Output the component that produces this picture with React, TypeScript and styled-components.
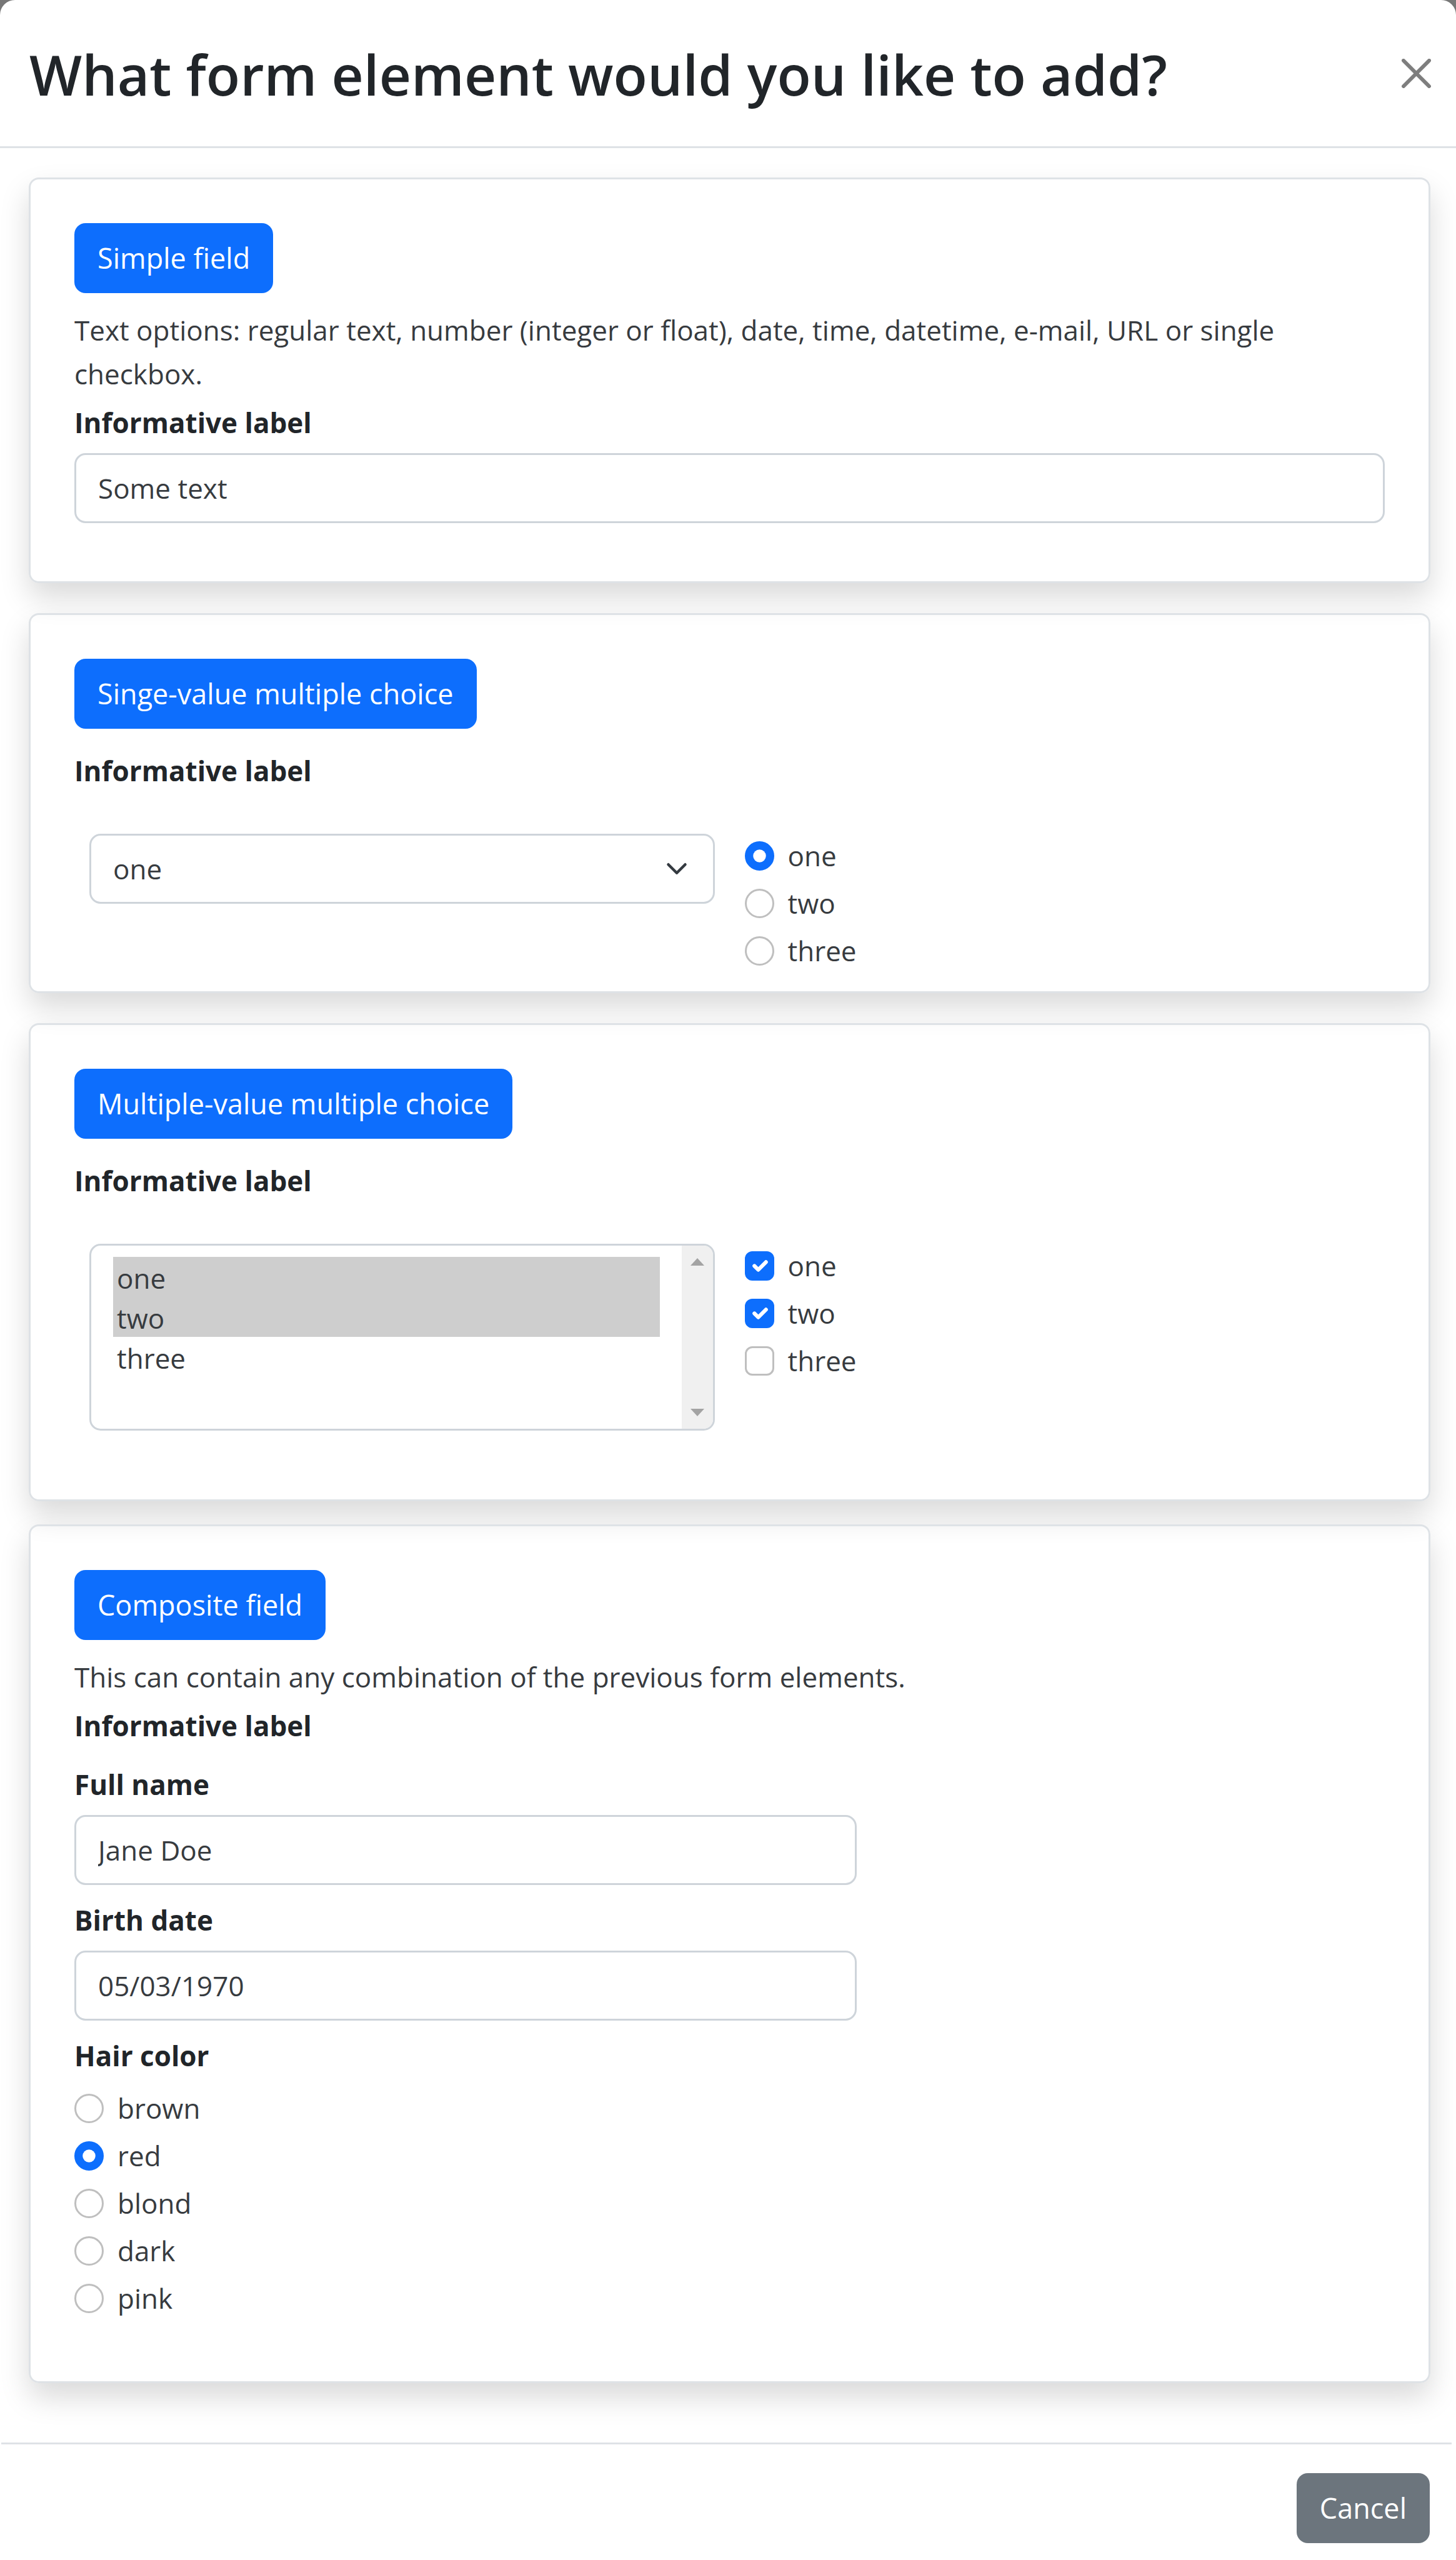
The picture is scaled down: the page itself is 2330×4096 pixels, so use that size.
import React from "react";
import styled, { createGlobalStyle, css } from "styled-components";

const GlobalStyle = createGlobalStyle`
  *, *::before, *::after { box-sizing: border-box; }
  body {
    margin: 0;
    background: #777;
    color: #373b3f;
    font-family: "Open Sans", "Noto Sans", sans-serif;
    font-size: 44px;
    line-height: 70px;
  }
  button, input, select { font: inherit; color: inherit; margin: 0; }
`;

const Modal = styled.main`
  min-height: 100vh;
  background: #fff;
  border-radius: 24px 24px 0 0;
`;

const Header = styled.header`
  display: flex;
  align-items: center;
  justify-content: space-between;
  padding: 47px 40px 47px 47px;
  border-bottom: 3px solid #dee2e6;
`;

const Title = styled.h1`
  margin: 0;
  padding-top: 4px;
  color: #212529;
  font-size: 89px;
  font-weight: 600;
  line-height: 136px;
`;

const CloseButton = styled.button`
  display: flex;
  padding: 0;
  border: 0;
  background: none;
  color: #000;
  opacity: 0.5;
`;

const Body = styled.div`
  display: flex;
  flex-direction: column;
  gap: 48px;
  padding: 47px 41px 95px 46px;
`;

const Card = styled.section<{ $bottom: number }>`
  padding: 70px 70px ${(p) => p.$bottom}px;
  border: 3px solid #dee2e6;
  border-radius: 16px;
  box-shadow: 0 23px 47px rgba(0, 0, 0, 0.15);
`;

const CardPair = styled.div`
  display: flex;
  flex-direction: column;
  gap: 37px;
`;

const Button = styled.button<{ $tone?: "secondary" }>`
  display: block;
  height: 112px;
  padding: 0 37px;
  border: 0;
  border-radius: 18px;
  background: ${(p) => (p.$tone === "secondary" ? "#6c757d" : "#0d6efd")};
  color: #fff;
  font-size: 45px;
`;

const Description = styled.p`
  margin: 24px 0 8px;
`;

const labelText = css`
  display: block;
  color: #212529;
  font-weight: 700;
`;

const Label = styled.label`
  ${labelText}
  margin-bottom: 14px;
`;

const GroupTitle = styled.div<{ $top: number; $bottom: number }>`
  ${labelText}
  margin: ${(p) => p.$top}px 0 ${(p) => p.$bottom}px;
`;

const boxed = css`
  display: block;
  width: 100%;
  border: 3px solid #ced4da;
  border-radius: 18px;
  background-color: #fff;
`;

const TextInput = styled.input`
  ${boxed}
  height: 112px;
  padding: 0 35px;
`;

const chevron = `url("data:image/svg+xml,%3csvg xmlns='http://www.w3.org/2000/svg' viewBox='0 0 16 16'%3e%3cpath fill='none' stroke='%23343a40' stroke-linecap='round' stroke-linejoin='round' stroke-width='2' d='m2 5 6 6 6-6'/%3e%3c/svg%3e")`;
const tick = `url("data:image/svg+xml,%3csvg xmlns='http://www.w3.org/2000/svg' viewBox='0 0 20 20'%3e%3cpath fill='none' stroke='%23fff' stroke-linecap='round' stroke-linejoin='round' stroke-width='3' d='m6 10 3 3 6-6'/%3e%3c/svg%3e")`;
const dot = `url("data:image/svg+xml,%3csvg xmlns='http://www.w3.org/2000/svg' viewBox='-4 -4 8 8'%3e%3ccircle r='2' fill='%23fff'/%3e%3c/svg%3e")`;

const Select = styled.select`
  ${boxed}
  height: 112px;
  padding: 0 105px 0 35px;
  appearance: none;
  background-image: ${chevron};
  background-repeat: no-repeat;
  background-position: right 40px center;
  background-size: 36px 36px;
`;

const Columns = styled.div`
  display: grid;
  grid-template-columns: 1fr 1fr;
`;

const Column = styled.div`
  padding: 0 24px;
`;

const ListFrame = styled.div`
  ${boxed}
  display: flex;
  height: 299px;
  overflow: hidden;
`;

const ListBox = styled.select`
  flex: 1;
  min-width: 0;
  height: 100%;
  padding: 18px 35px 0;
  border: 0;
  outline: 0;
  background: none;
  overflow: hidden;
  appearance: none;
  option {
    height: 64px;
    min-height: 64px;
    padding: 4px 6px 0;
    line-height: 60px;
    color: #373b3f;
  }
  option:checked {
    background: #cecece linear-gradient(#cecece, #cecece);
    color: #373b3f;
  }
`;

const ScrollTrack = styled.div`
  display: flex;
  flex-direction: column;
  justify-content: space-between;
  align-items: center;
  width: 50px;
  padding: 20px 0;
  background: #f0f0f0;
`;

const Choices = styled.div`
  display: flex;
  flex-direction: column;
  gap: 6px;
`;

const Choice = styled.label`
  display: flex;
  gap: 22px;
`;

const Check = styled.input`
  appearance: none;
  flex: none;
  width: 47px;
  height: 47px;
  margin-top: 12px;
  border: 3px solid #bfbfbf;
  border-radius: ${(p) => (p.type === "radio" ? "50%" : "12px")};
  background: #fff center / 100% 100% no-repeat;
  &:checked {
    border-color: #0d6efd;
    background-color: #0d6efd;
    background-image: ${(p) => (p.type === "radio" ? dot : tick)};
  }
`;

const Field = styled.div`
  max-width: 1252px;
  margin-bottom: 21px;
`;

const Footer = styled.footer`
  display: flex;
  justify-content: flex-end;
  margin: 0 7px 0 2px;
  padding: 46px 35px 27px;
  border-top: 3px solid #dee2e6;
`;

const Arrow = ({ down }: { down?: boolean }) => (
  <svg width="22" height="12" viewBox="0 0 22 12" aria-hidden="true">
    <path fill="#a3a3a3" d={down ? "M0 0h22L11 12z" : "M0 12h22L11 0z"} />
  </svg>
);

type OptionsProps = {
  type: "radio" | "checkbox";
  name: string;
  options: string[];
  checked: string[];
};

const Options = ({ type, name, options, checked }: OptionsProps) => (
  <Choices>
    {options.map((o) => (
      <Choice key={o}>
        <Check type={type} name={name} value={o} defaultChecked={checked.includes(o)} />
        {o}
      </Choice>
    ))}
  </Choices>
);

const numbers = ["one", "two", "three"];

export default function App() {
  return (
    <>
      <GlobalStyle />
      <Modal>
        <Header>
          <Title>What form element would you like to add?</Title>
          <CloseButton aria-label="Close">
            <svg width="47" height="47" viewBox="0 0 16 16" aria-hidden="true">
              <path d="M.293.293a1 1 0 0 1 1.414 0L8 6.586 14.293.293a1 1 0 1 1 1.414 1.414L9.414 8l6.293 6.293a1 1 0 0 1-1.414 1.414L8 9.414l-6.293 6.293a1 1 0 0 1-1.414-1.414L6.586 8 .293 1.707a1 1 0 0 1 0-1.414z" />
            </svg>
          </CloseButton>
        </Header>
        <Body>
          <Card $bottom={93}>
            <Button>Simple field</Button>
            <Description>
              Text options: regular text, number (integer or float), date, time, datetime, e-mail,
              URL or single checkbox.
            </Description>
            <Label htmlFor="simple">Informative label</Label>
            <TextInput id="simple" defaultValue="Some text" />
          </Card>

          <Card $bottom={30}>
            <Button>Singe-value multiple choice</Button>
            <GroupTitle $top={32} $bottom={66}>Informative label</GroupTitle>
            <Columns>
              <Column>
                <Select aria-label="Informative label" defaultValue="one">
                  {numbers.map((n) => <option key={n}>{n}</option>)}
                </Select>
              </Column>
              <Column>
                <Options type="radio" name="single" options={numbers} checked={["one"]} />
              </Column>
            </Columns>
          </Card>

          <CardPair>
            <Card $bottom={110}>
              <Button>Multiple-value multiple choice</Button>
              <GroupTitle $top={32} $bottom={66}>Informative label</GroupTitle>
              <Columns>
                <Column>
                  <ListFrame>
                    <ListBox multiple size={4} aria-label="Informative label" defaultValue={["one", "two"]}>
                      {numbers.map((n) => <option key={n}>{n}</option>)}
                    </ListBox>
                    <ScrollTrack>
                      <Arrow />
                      <Arrow down />
                    </ScrollTrack>
                  </ListFrame>
                </Column>
                <Column>
                  <Options type="checkbox" name="multi" options={numbers} checked={["one", "two"]} />
                </Column>
              </Columns>
            </Card>

            <Card $bottom={98}>
              <Button>Composite field</Button>
              <Description>This can contain any combination of the previous form elements.</Description>
              <GroupTitle $top={0} $bottom={24}>Informative label</GroupTitle>
              <Field>
                <Label htmlFor="fullname">Full name</Label>
                <TextInput id="fullname" defaultValue="Jane Doe" />
              </Field>
              <Field>
                <Label htmlFor="birth">Birth date</Label>
                <TextInput id="birth" defaultValue="05/03/1970" />
              </Field>
              <GroupTitle $top={0} $bottom={14}>Hair color</GroupTitle>
              <Options
                type="radio"
                name="hair"
                options={["brown", "red", "blond", "dark", "pink"]}
                checked={["red"]}
              />
            </Card>
          </CardPair>
        </Body>
        <Footer>
          <Button $tone="secondary">Cancel</Button>
        </Footer>
      </Modal>
    </>
  );
}
